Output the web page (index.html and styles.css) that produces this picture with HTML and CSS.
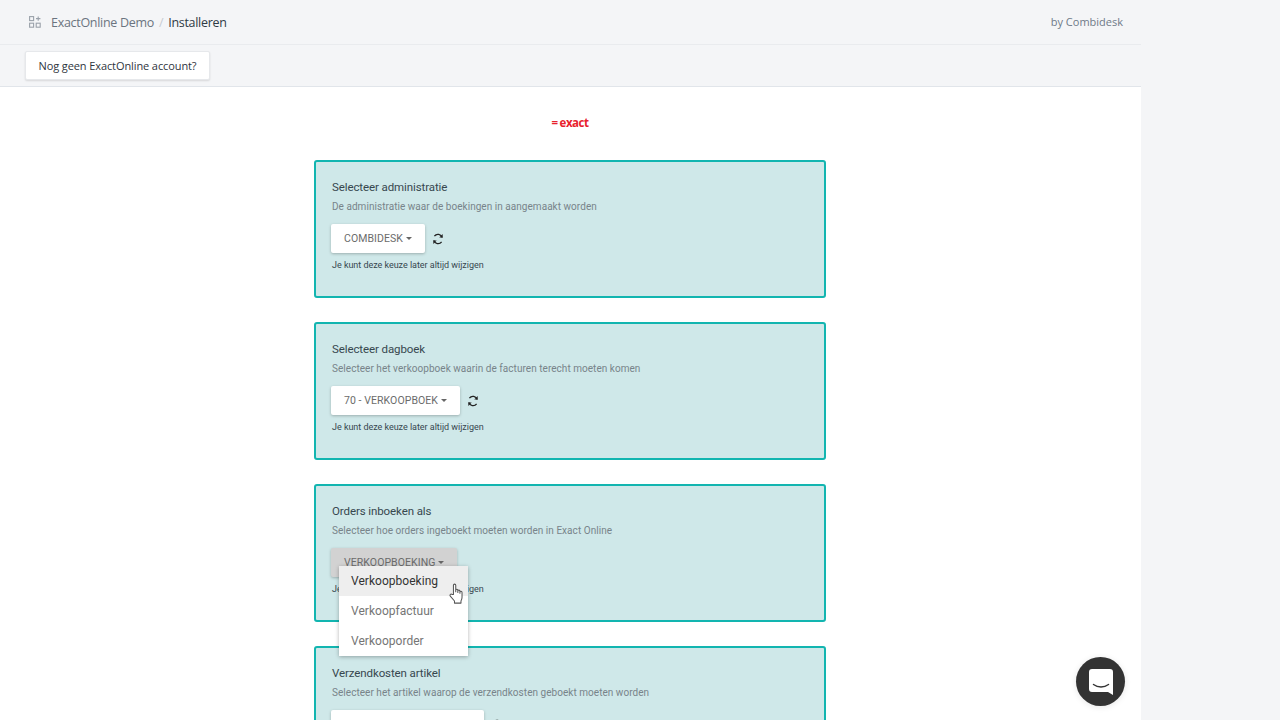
FILE: index.html
```html
<!DOCTYPE html>
<html lang="nl">
<head>
<meta charset="utf-8">
<title>ExactOnline Demo / Installeren</title>
<link rel="stylesheet" href="styles.css">
</head>
<body>
<div class="app">
  <header class="topbar">
    <div class="crumbs">
      <svg class="apps-icon" width="12" height="12" viewBox="0 0 12 12" fill="none" stroke="#9aa1aa" stroke-width="1.1"><rect x="0.6" y="0.6" width="4" height="4"/><rect x="0.6" y="7.2" width="4" height="4"/><rect x="7.2" y="7.2" width="4" height="4"/><path d="M9.2 0.400v4.400M7 2.600h4.400"/></svg>
      <span class="crumb-app">ExactOnline Demo</span>
      <span class="crumb-sep">/</span>
      <span class="crumb-page">Installeren</span>
    </div>
    <span class="by">by Combidesk</span>
  </header>
  <div class="toolbar">
    <button class="account-btn">Nog geen ExactOnline account?</button>
  </div>
  <main class="content">
    <div class="logo"><span class="logo-mark">=</span><span class="logo-word">exact</span></div>

    <section class="card">
      <h2 class="card-title">Selecteer administratie</h2>
      <p class="card-desc">De administratie waar de boekingen in aangemaakt worden</p>
      <div class="select-row">
        <button class="select-btn">COMBIDESK<i class="caret"></i></button>
        <svg class="refresh" width="12" height="12" viewBox="0 0 12 12" fill="none" stroke="#222" stroke-width="1.3"><path d="M10.200 4.600A4.400 4.400 0 0 0 2.400 3.200"/><path d="M1.800 7.400a4.400 4.400 0 0 0 7.800 1.400"/><path d="M10.700 0.900v3.600h-3.400z" fill="#222" stroke="none"/><path d="M1.300 11.100V7.500h3.400z" fill="#222" stroke="none"/></svg>
      </div>
      <p class="card-note">Je kunt deze keuze later altijd wijzigen</p>
    </section>

    <section class="card">
      <h2 class="card-title">Selecteer dagboek</h2>
      <p class="card-desc">Selecteer het verkoopboek waarin de facturen terecht moeten komen</p>
      <div class="select-row">
        <button class="select-btn">70 - VERKOOPBOEK<i class="caret"></i></button>
        <svg class="refresh" width="12" height="12" viewBox="0 0 12 12" fill="none" stroke="#222" stroke-width="1.3"><path d="M10.200 4.600A4.400 4.400 0 0 0 2.400 3.200"/><path d="M1.800 7.400a4.400 4.400 0 0 0 7.800 1.400"/><path d="M10.700 0.900v3.600h-3.400z" fill="#222" stroke="none"/><path d="M1.300 11.100V7.500h3.400z" fill="#222" stroke="none"/></svg>
      </div>
      <p class="card-note">Je kunt deze keuze later altijd wijzigen</p>
    </section>

    <section class="card">
      <h2 class="card-title">Orders inboeken als</h2>
      <p class="card-desc">Selecteer hoe orders ingeboekt moeten worden in Exact Online</p>
      <div class="select-row">
        <div class="dropdown">
          <button class="select-btn is-open">VERKOOPBOEKING<i class="caret"></i></button>
          <ul class="menu">
            <li class="menu-item is-active">Verkoopboeking</li>
            <li class="menu-item">Verkoopfactuur</li>
            <li class="menu-item">Verkooporder</li>
          </ul>
          <svg class="cursor" width="18" height="22" viewBox="0 0 16 21" fill="#fff" stroke="#555" stroke-width="1" stroke-linejoin="round"><path d="M4.600 11V2.200c0-1.500 2.200-1.500 2.200 0V8.400V6.900c0-1.300 2-1.300 2 0V9V7.700c0-1.200 2-1.200 2 .1V9.700V8.800c0-1.200 2-1.200 2 0.200v4.600c0 1.600-.4 2.600-1 3.600v2H5.600v-2L1.600 12.600c-1-1.300.6-2.700 1.800-1.600z"/></svg>
        </div>
      </div>
      <p class="card-note">Je kunt deze keuze later altijd wijzigen</p>
    </section>

    <section class="card">
      <h2 class="card-title">Verzendkosten artikel</h2>
      <p class="card-desc">Selecteer het artikel waarop de verzendkosten geboekt moeten worden</p>
      <div class="select-row">
        <button class="select-btn is-blank"></button>
        <svg class="refresh" width="12" height="12" viewBox="0 0 12 12" fill="none" stroke="#222" stroke-width="1.3"><path d="M10.200 4.600A4.400 4.400 0 0 0 2.400 3.200"/><path d="M1.800 7.400a4.400 4.400 0 0 0 7.800 1.400"/><path d="M10.700 0.900v3.600h-3.400z" fill="#222" stroke="none"/><path d="M1.300 11.100V7.500h3.400z" fill="#222" stroke="none"/></svg>
      </div>
    </section>
  </main>
</div>
<button class="chat" aria-label="Chat">
  <svg width="24" height="26" viewBox="0 0 24 26"><path d="M3 0h18a3 3 0 0 1 3 3v23l-5-3H3a3 3 0 0 1-3-3V3a3 3 0 0 1 3-3z" fill="#fff"/><path d="M4.500 15.500c4.500 3.200 10.500 3.200 15 0" fill="none" stroke="#333" stroke-width="1.500" stroke-linecap="round"/></svg>
</button>
</body>
</html>
```
FILE: styles.css
```css
* { box-sizing: border-box; }
html, body { height: 100%; }
body {
  margin: 0;
  height: 720px;
  overflow: hidden;
  background: #f4f5f7;
  font-family: "Open Sans", "Liberation Sans", sans-serif;
}
.app { width: 1141px; height: 720px; overflow: hidden; display: flex; flex-direction: column; }
.topbar {
  flex: none;
  height: 45px;
  padding: 0 18px 0 29px;
  display: flex;
  align-items: center;
  justify-content: space-between;
  border-bottom: 1px solid #e9ebee;
}
.crumbs { display: flex; align-items: center; font-size: 12.500px; letter-spacing: -.3px; }
.apps-icon { margin-right: 10px; }
.crumb-app { color: #6b7480; }
.crumb-sep { color: #c8ccd2; margin: 0 5px; }
.crumb-page { color: #2f3a45; }
.by { font-size: 11px; color: #6f7a88; margin-bottom: 2px; }
.toolbar {
  flex: none;
  height: 42px;
  padding: 6px 25px 0;
  border-bottom: 1px solid #e1e5ea;
}
.account-btn {
  width: 185px;
  height: 29px;
  padding: 0;
  background: #fff;
  border: 1px solid #e6e8eb;
  border-radius: 2px;
  box-shadow: 0 1px 2px rgba(0,0,0,.12);
  font: 11px "Open Sans", "Liberation Sans", sans-serif;
  letter-spacing: -.1px;
  color: #2f3640;
}
.content {
  flex: 1;
  min-height: 0;
  background: #fff;
  display: flex;
  flex-direction: column;
  align-items: center;
  padding: 27px 1px 0 0;
  gap: 24px;
}
.logo {
  flex: none;
  height: 22px;
  color: #e8212d;
  font: bold 11.500px "Open Sans", "Liberation Sans", sans-serif;
  line-height: 18px;
  letter-spacing: -.45px;
}
.logo-mark { margin-right: 2px; }
.card {
  flex: none;
  position: relative;
  width: 512px;
  height: 138px;
  padding: 18px 16px 0;
  background: #cfe8e9;
  border: 2px solid #12b5b0;
  border-radius: 3px;
  font-family: Roboto, "Liberation Sans", sans-serif;
}
.card-title { margin: 0; font-size: 11.500px; font-weight: 400; line-height: 15px; color: #37474f; letter-spacing: -.1px; }
.card-desc { margin: 5px 0 0; font-size: 10px; line-height: 14px; color: #78848a; letter-spacing: .04px; }
.select-row { display: flex; align-items: center; gap: 7px; margin: 10px 0 0 -1px; }
.select-btn {
  height: 29px;
  padding: 0 13px;
  display: inline-flex;
  align-items: center;
  background: #fff;
  border: 0;
  border-radius: 2px;
  box-shadow: 0 1px 3px rgba(0,0,0,.25);
  font: 10.500px Roboto, "Liberation Sans", sans-serif;
  letter-spacing: .07px;
  color: #6b6b6b;
}
.select-btn.is-open { background: #d2d2d2; }
.select-btn.is-blank { width: 153px; }
.caret { width: 0; height: 0; margin-left: 3px; border: 3.500px solid transparent; border-top-color: #666; border-bottom: 0; }
.refresh { flex: none; }
.card-note { margin: 6px 0 0; font-size: 9px; line-height: 12px; color: #37474f; letter-spacing: -.03px; }
.dropdown { position: relative; }
.menu {
  position: absolute;
  z-index: 2;
  left: 8px;
  top: 18px;
  width: 129px;
  margin: 0;
  padding: 0;
  list-style: none;
  background: #fff;
  box-shadow: 0 1px 4px rgba(0,0,0,.3);
}
.menu-item { height: 30px; padding-left: 12px; font-size: 12px; line-height: 30px; color: #757575; letter-spacing: .03px; }
.menu-item.is-active { background: #eee; color: #333; }
.cursor { position: absolute; z-index: 3; left: 117px; top: 35px; }
.chat {
  position: fixed;
  left: 1076px;
  top: 657px;
  width: 49px;
  height: 49px;
  padding: 0;
  display: flex;
  align-items: center;
  justify-content: center;
  background: #333;
  border: 0;
  border-radius: 50%;
  box-shadow: 0 1px 6px rgba(0,0,0,.1);
}
```
